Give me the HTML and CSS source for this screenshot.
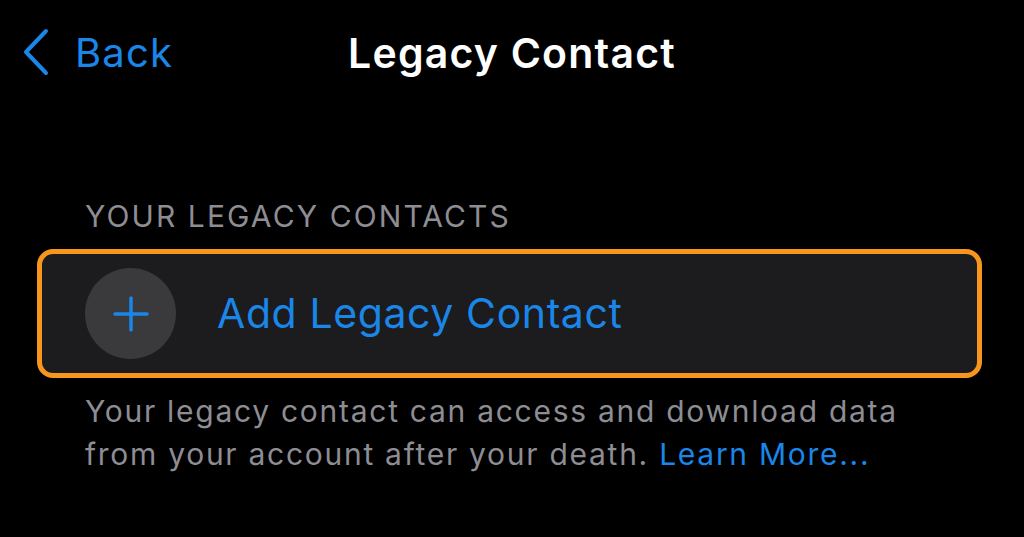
FILE: index.html
```html
<!DOCTYPE html>
<html lang="en">
<head>
  <meta charset="UTF-8" />
  <title>Legacy Contact</title>
  <link rel="stylesheet" href="styles.css">
</head>
<body>
  <div class="nav">
    <div class="back">
      <svg class="chevron" width="28" height="48" viewBox="0 0 28 48">
        <path d="M24 3 L4 24 L24 45" fill="none" stroke="#1a86e8" stroke-width="4" stroke-linecap="round" stroke-linejoin="round"/>
      </svg>
      <span>Back</span>
    </div>
    <div class="title">Legacy Contact</div>
  </div>

  <div class="section">
    <div class="section-header">YOUR LEGACY CONTACTS</div>
    <div class="group">
      <div class="row">
        <div class="add-icon">
          <svg width="36" height="36" viewBox="0 0 36 36">
            <path d="M18 2 V34 M2 18 H34" stroke="#1a86e8" stroke-width="3.5" stroke-linecap="round"/>
          </svg>
        </div>
        <span class="row-label">Add Legacy Contact</span>
      </div>
    </div>
    <p class="footer">Your legacy contact can access and download data<br>from your account after your death. <span class="link">Learn More...</span></p>
  </div>
</body>
</html>
```

FILE: styles.css
```css
body {
  margin: 0;
  background: #000;
  font-family: Inter, "Noto Sans", sans-serif;
  color: #fff;
  width: 1024px;
  height: 537px;
  overflow: hidden;
}

.nav {
  position: relative;
  height: 106px;
  display: flex;
  align-items: center;
  padding: 0 0 0 22px;
}

.back {
  display: flex;
  align-items: center;
  gap: 25px;
  color: #1a86e8;
  font-size: 40px;
  letter-spacing: 1.2px;
  height: 106px;
  margin-top: -2px;
}

.title {
  position: absolute;
  left: 0;
  top: 28px;
  width: 1024px;
  text-align: center;
  font-size: 41px;
  font-weight: 600;
  letter-spacing: 1.2px;
}

.section {
  padding: 92px 42px 0 37px;
}

.section-header {
  color: #8d8d93;
  font-size: 30px;
  padding-left: 48px;
  margin-bottom: 15px;
  letter-spacing: 2.1px;
}

.group {
  box-sizing: border-box;
  border: 5px solid #f7951d;
  border-radius: 16px;
  background: #1c1c1e;
  height: 129px;
  display: flex;
  align-items: center;
}

.row {
  display: flex;
  align-items: center;
  padding-left: 43px;
  gap: 41px;
}

.add-icon {
  width: 91px;
  height: 91px;
  border-radius: 50%;
  background: #3a3a3d;
  display: flex;
  align-items: center;
  justify-content: center;
}

.row-label {
  color: #1a86e8;
  font-size: 41px;
  letter-spacing: 0.6px;
  margin-top: -2px;
}

.footer {
  margin: 12px 0 0 48px;
  color: #8d8d93;
  font-size: 30px;
  line-height: 43px;
  letter-spacing: 1.72px;
  white-space: nowrap;
}

.link {
  color: #1a86e8;
}
```
